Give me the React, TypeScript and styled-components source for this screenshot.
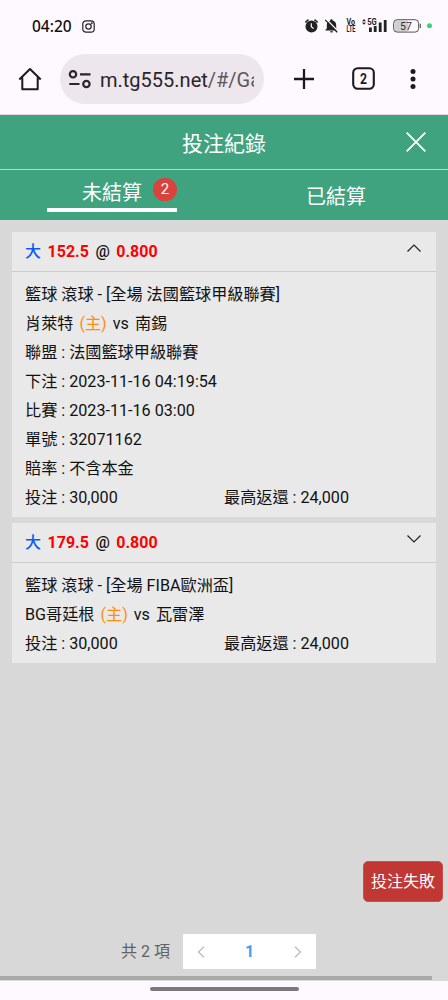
import React from 'react';
import styled, { createGlobalStyle } from 'styled-components';

const GlobalStyle = createGlobalStyle`
  * { box-sizing: border-box; }
  body {
    margin: 0;
    background: #fef9fe;
    color: #111;
    font-family: Roboto, "Noto Sans CJK TC", sans-serif;
  }
`;

const Screen = styled.div`
  position: relative;
  width: 448px;
  height: 1000px;
  display: flex;
  flex-direction: column;
  overflow: hidden;
`;

const StatusBar = styled.div`
  height: 50px;
  padding: 2px 15px 0 32px;
  display: flex;
  align-items: center;
  justify-content: space-between;
`;

const Clock = styled.div`
  display: flex;
  align-items: center;
  gap: 10px;
  font: 500 15.5px/20px "Noto Sans", sans-serif;
  color: #111;
`;

const StatusIcons = styled.svg`
  display: block;
`;

const BrowserBar = styled.div`
  height: 65px;
  padding: 4px 0 11px;
  display: flex;
  align-items: center;
  border-bottom: 1px solid #e6d8de;
`;

const IconSlot = styled.div<{ $width: number }>`
  width: ${(p) => p.$width}px;
  display: flex;
  justify-content: center;
  svg { display: block; }
`;

const AddressPill = styled.div`
  width: 204px;
  height: 50px;
  border-radius: 25px;
  background: #eee6ed;
  display: flex;
  align-items: center;
  padding: 0 10px 0 8px;
  gap: 8px;
`;

const Url = styled.div`
  flex: 1;
  overflow: hidden;
  white-space: nowrap;
  font-size: 20px;
  line-height: 30px;
  padding-top: 2px;
  color: #29252b;
  span { color: #5d575f; }
`;

const TitleBar = styled.header`
  height: 55px;
  background: #40a380;
  border-bottom: 1px solid #b9d6cb;
  color: #fff;
  display: grid;
  grid-template-columns: 64px 1fr 64px;
  align-items: center;
  justify-items: center;
  font-size: 21px;
`;

const Tabs = styled.nav`
  height: 50px;
  background: #40a380;
  display: grid;
  grid-template-columns: 1fr 1fr;
  justify-items: center;
  color: #fff;
  font-size: 20px;
`;

const Tab = styled.div<{ $active?: boolean }>`
  width: 130px;
  height: ${(p) => (p.$active ? 42 : 50)}px;
  border-bottom: ${(p) => (p.$active ? '4px solid #fff' : '0')};
  display: flex;
  align-items: center;
  justify-content: ${(p) => (p.$active ? 'flex-end' : 'center')};
  gap: 11px;
  padding-top: ${(p) => (p.$active ? 4 : 1)}px;
`;

const Count = styled.span`
  width: 24px;
  height: 23px;
  margin-top: -4px;
  border-radius: 12px;
  background: #d9423d;
  text-align: center;
  font-size: 15px;
  line-height: 23px;
`;

const Content = styled.main`
  height: 756px;
  background: #d8d8d8;
  padding: 12px 12px 0;
  display: flex;
  flex-direction: column;
  gap: 6px;
`;

const Card = styled.section`
  width: 424px;
  background: #e9e9e9;
  font-size: 16.15px;
`;

const CardHead = styled.div`
  height: 40px;
  padding: 0 15px 0 13px;
  border-bottom: 1px solid #cdcdcd;
  display: flex;
  justify-content: space-between;
  align-items: center;
  svg { display: block; margin-top: -7px; }
`;

const Odds = styled.div`
  display: flex;
  gap: 6.5px;
  font-size: 16px;
  font-weight: 500;
  line-height: 24px;
`;

const Side = styled.span`
  color: #0a5cf0;
  font-weight: 500;
`;

const Price = styled.span`
  color: #fe0000;
  font-weight: 700;
`;

const CardBody = styled.div`
  padding: 8px 13px 5px;
`;

const Line = styled.div`
  height: 29px;
  line-height: 29px;
  white-space: pre;
  display: flex;
`;

const Stake = styled.div`
  width: 199px;
`;

const Teams = styled(Line)`
  gap: 6px;
`;

const Home = styled.span`
  color: #ff8e0a;
`;

const Pager = styled.div`
  margin-top: auto;
  height: 42px;
  padding-left: 109px;
  display: flex;
  align-items: flex-start;
`;

const Total = styled.div`
  width: 62px;
  line-height: 35px;
  font-size: 16px;
  color: #606266;
`;

const PageBox = styled.div`
  width: 133px;
  height: 35px;
  background: #fff;
  display: flex;
  align-items: center;
  justify-content: space-between;
  padding: 0 14px;
  color: #409eff;
  font-weight: 700;
  font-size: 16px;
`;

const Toast = styled.button`
  position: absolute;
  left: 363px;
  top: 861px;
  width: 80px;
  height: 41px;
  padding: 1px 0 0;
  border: 1px solid #c9504b;
  border-radius: 5px;
  background: #c03733;
  color: #fff;
  font: 16px/38px Roboto, "Noto Sans CJK TC", sans-serif;
`;

const ScrollTrack = styled.div`
  height: 5px;
  background: #d8d8d8;
`;

const ScrollThumb = styled.div`
  width: 432px;
  height: 4px;
  background: #a9a9a9;
`;

const NavArea = styled.div`
  height: 19px;
  display: flex;
  justify-content: center;
  padding-top: 6px;
`;

const NavHandle = styled.div`
  width: 149px;
  height: 4px;
  border-radius: 2px;
  background: #7b777b;
`;

const Chevron = ({ d, w, h, color = '#222', sw = 1.2 }: { d: string; w: number; h: number; color?: string; sw?: number }) => (
  <svg width={w} height={h} viewBox={`0 0 ${w} ${h}`} fill="none" stroke={color} strokeWidth={sw}>
    <path d={d} />
  </svg>
);

interface Bet {
  line: string;
  odds: string;
  open: boolean;
  league: string;
  home: string;
  away: string;
  details: string[];
}

const bets: Bet[] = [
  {
    line: '152.5',
    odds: '0.800',
    open: true,
    league: '籃球 滾球 - [全場 法國籃球甲級聯賽]',
    home: '肖萊特',
    away: '南錫',
    details: [
      '聯盟 : 法國籃球甲級聯賽',
      '下注 : 2023-11-16 04:19:54',
      '比賽 : 2023-11-16 03:00',
      '單號 : 32071162',
      '賠率 : 不含本金',
    ],
  },
  {
    line: '179.5',
    odds: '0.800',
    open: false,
    league: '籃球 滾球 - [全場 FIBA歐洲盃]',
    home: 'BG哥廷根',
    away: '瓦雷澤',
    details: [],
  },
];

const BetCard = ({ bet }: { bet: Bet }) => (
  <Card>
    <CardHead>
      <Odds>
        <Side>大</Side>
        <Price>{bet.line}</Price>
        <span>@</span>
        <Price>{bet.odds}</Price>
      </Odds>
      <Chevron w={14} h={8} d={bet.open ? 'M.5 7.5 7 1l6.5 6.5' : 'M.5 .5 7 7 13.5 .5'} />
    </CardHead>
    <CardBody>
      <Line>{bet.league}</Line>
      <Teams>
        <span>{bet.home}</span>
        <Home>(主)</Home>
        <span>vs</span>
        <span>{bet.away}</span>
      </Teams>
      {bet.details.map((d) => (
        <Line key={d}>{d}</Line>
      ))}
      <Line>
        <Stake>投注 : 30,000</Stake>
        <div>最高返還 : 24,000</div>
      </Line>
    </CardBody>
  </Card>
);

const DeviceStatus = () => (
  <StatusIcons width="130" height="18" viewBox="303 17 130 18">
    <g fill="#222" stroke="#222">
      <circle cx="311.5" cy="26.6" r="6" stroke="none" />
      <path d="M305.3 22.4l3.2-2.8M317.7 22.4l-3.2-2.8" fill="none" strokeWidth="1.4" />
      <path d="M311.3 23.2v3.6l2.2 1.6" fill="none" stroke="#fef9fe" strokeWidth="1.2" />
    </g>
    <path
      d="M331.5 19.2c.8 0 1.2.5 1.2 1.3 2.4.6 3.5 2.4 3.5 4.7v3.3l1.4 1.5v.6h-12.2v-.6l1.4-1.5v-3.3c0-2.3 1.1-4.1 3.5-4.7 0-.8.4-1.3 1.2-1.3zM330 31.2h3c0 .8-.6 1.4-1.5 1.4s-1.5-.6-1.5-1.4z"
      fill="#222"
    />
    <path d="M326.3 19.2l12 12.3" stroke="#fef9fe" strokeWidth="1.4" />
    <path d="M325.2 19.9l12 12.3" stroke="#222" strokeWidth="1.3" />
    <g fill="#222" fontFamily="Roboto, sans-serif" fontWeight="700">
      <text x="346.5" y="25.3" fontSize="8.5" textLength="8.5" lengthAdjust="spacingAndGlyphs">Vo</text>
      <text x="346.5" y="32.3" fontSize="8.5" textLength="9" lengthAdjust="spacingAndGlyphs">LTE</text>
      <text x="367.2" y="25.2" fontSize="9" textLength="9.5" lengthAdjust="spacingAndGlyphs">5G</text>
    </g>
    <path
      d="M362 21.3l2-2.2 2 2.2zM362 22.6l2 2.2 2-2.2zM369 27.5h2.800v4.500h-2.800zM373.800 26h2.800v6h-2.800zM378.800 22.500h2.800v9.500h-2.800zM383.800 20h2.800v12h-2.800z"
      fill="#222"
    />
    <rect x="394.5" y="20.5" width="14" height="11" rx="2" fill="#d2ced2" />
    <rect x="393.6" y="19.7" width="25" height="12.4" rx="3.5" fill="none" stroke="#555" />
    <path d="M420.3 23.8v4.2" stroke="#555" strokeWidth="1.2" />
    <text x="406" y="29.6" fontSize="10.5" textAnchor="middle" fill="#333" fontFamily="Roboto, sans-serif">57</text>
    <circle cx="429.5" cy="25.7" r="2.5" fill="#35d67b" />
  </StatusIcons>
);

export default function App() {
  return (
    <>
      <GlobalStyle />
      <Screen>
        <StatusBar>
          <Clock>
            04:20
            <svg width="13" height="13" viewBox="0 0 13 13" fill="none" stroke="#222" strokeWidth="1.2">
              <rect x=".8" y=".8" width="11.4" height="11.4" rx="3.2" />
              <circle cx="6.5" cy="6.5" r="2.7" />
              <circle cx="9.7" cy="3.3" r=".4" />
            </svg>
          </Clock>
          <DeviceStatus />
        </StatusBar>

        <BrowserBar>
          <IconSlot $width={60}>
            <svg width="24" height="24" viewBox="0 0 24 24" fill="none" stroke="#1d1920" strokeWidth="2" strokeLinejoin="round">
              <path d="M1.3 12.5 12 2l10.7 10.5M4.3 10.5v11.7h15.4V10.5" />
            </svg>
          </IconSlot>
          <AddressPill>
            <svg width="24" height="20" viewBox="0 0 24 20" fill="none" stroke="#29252b" strokeWidth="2.2">
              <circle cx="5" cy="5.3" r="3.2" />
              <path d="M12 5.3h10.5M1.3 15h10.2" />
              <circle cx="18.4" cy="15" r="3.2" />
            </svg>
            <Url>m.tg555.net<span>/#/Ga</span></Url>
          </AddressPill>
          <IconSlot $width={79}>
            <svg width="20" height="20" viewBox="0 0 20 20" stroke="#1d1920" strokeWidth="2.3">
              <path d="M10 0v20M0 10h20" />
            </svg>
          </IconSlot>
          <IconSlot $width={41}>
            <svg width="23" height="23" viewBox="0 0 23 23">
              <rect x="1.2" y="1.2" width="20.6" height="20.6" rx="4.5" fill="none" stroke="#1d1920" strokeWidth="2.1" />
              <text x="8" y="16.6" fontSize="14.5" fontWeight="700" textLength="7" lengthAdjust="spacingAndGlyphs" fill="#1d1920">2</text>
            </svg>
          </IconSlot>
          <IconSlot $width={58}>
            <svg width="6" height="22" viewBox="0 0 6 22" fill="#1d1920">
              <circle cx="3" cy="3.5" r="2.5" />
              <circle cx="3" cy="11" r="2.5" />
              <circle cx="3" cy="18.5" r="2.5" />
            </svg>
          </IconSlot>
        </BrowserBar>

        <TitleBar>
          <span />
          <span>投注紀錄</span>
          <Chevron w={20} h={20} color="#fff" sw={1.8} d="M.7 .7l18.6 18.6M19.3 .7.7 19.3" />
        </TitleBar>
        <Tabs>
          <Tab $active>
            未結算<Count>2</Count>
          </Tab>
          <Tab>已結算</Tab>
        </Tabs>

        <Content>
          {bets.map((bet) => (
            <BetCard key={bet.line} bet={bet} />
          ))}
          <Pager>
            <Total>共 2 項</Total>
            <PageBox>
              <Chevron w={8} h={12} color="#bcc0c8" sw={1.5} d="M7 .7 1.5 6 7 11.3" />
              <span>1</span>
              <Chevron w={8} h={12} color="#bcc0c8" sw={1.5} d="M1 .7 6.5 6 1 11.3" />
            </PageBox>
          </Pager>
        </Content>
        <ScrollTrack>
          <ScrollThumb />
        </ScrollTrack>
        <NavArea>
          <NavHandle />
        </NavArea>
        <Toast>投注失敗</Toast>
      </Screen>
    </>
  );
}
